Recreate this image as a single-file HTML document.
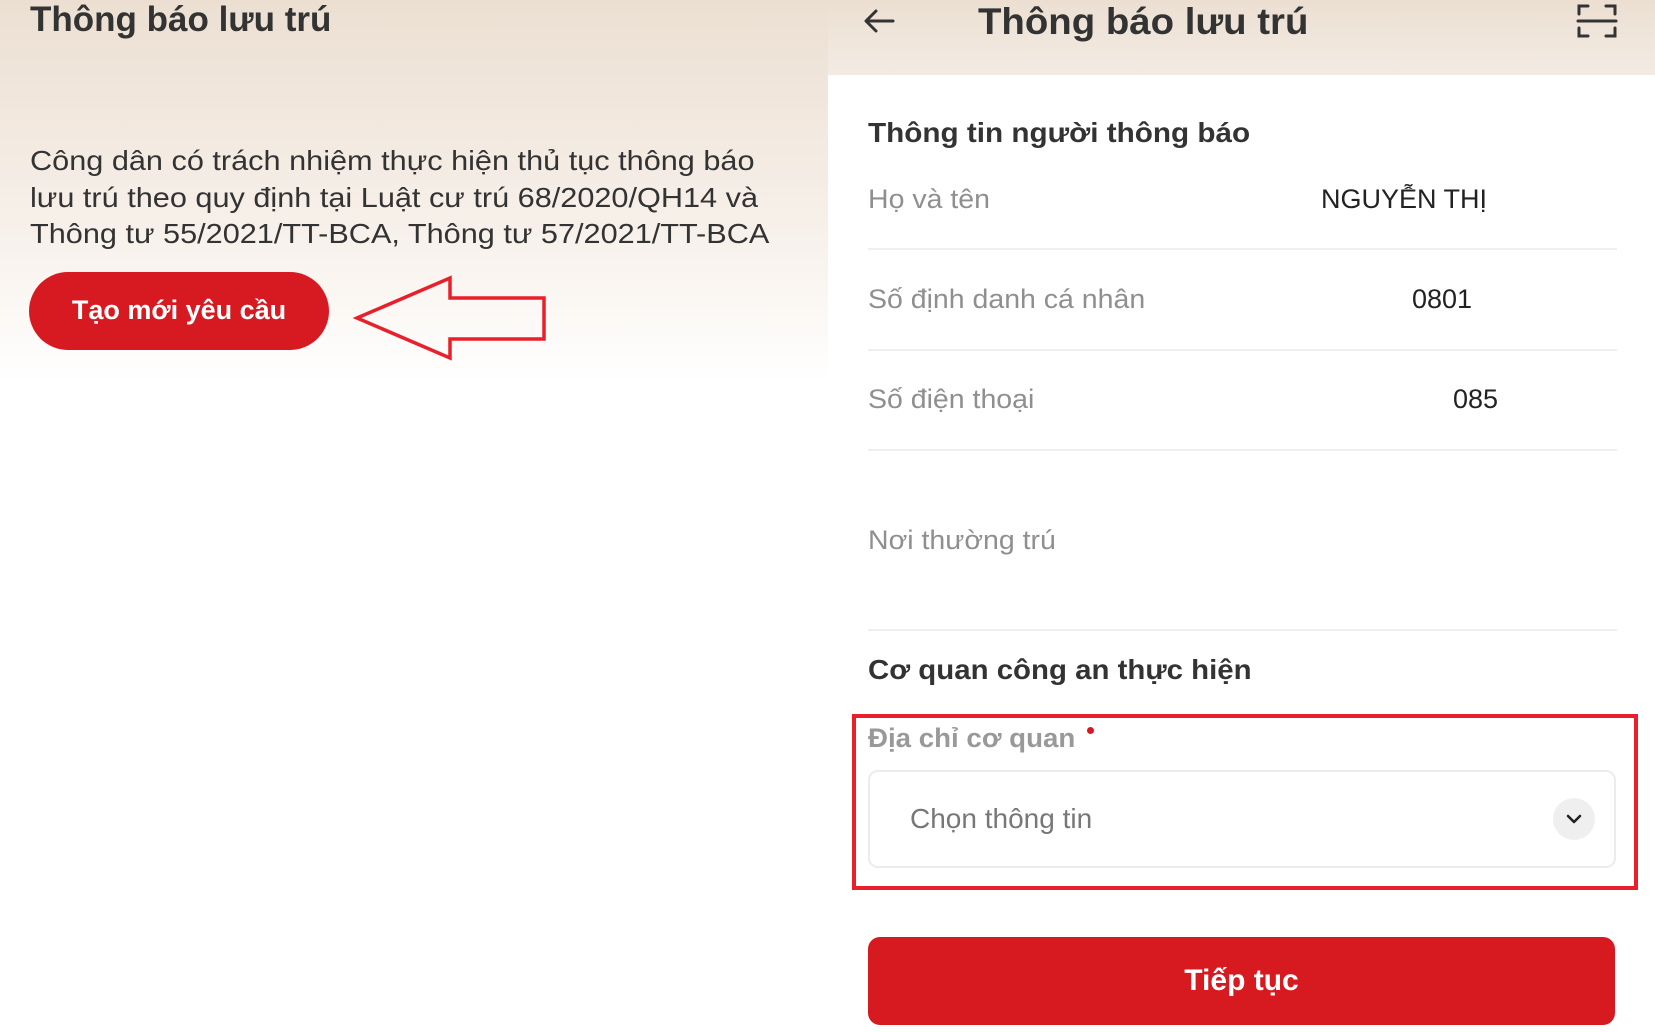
<!DOCTYPE html>
<html><head><meta charset="utf-8"><style>
*{margin:0;padding:0;box-sizing:border-box}
body{width:1655px;height:1032px;position:relative;background:#fff;font-family:"Liberation Sans",sans-serif;overflow:hidden}
.abs{position:absolute;white-space:nowrap;transform-origin:0 0}
.lbg{left:0;top:0;width:828px;height:385px;background:linear-gradient(#ecdfd2,#f6efe8 55%,#fff)}
.rbg{left:828px;top:0;width:827px;height:75px;background:linear-gradient(#ecdfd2,#f3ebe3)}
.gl{color:#8f8f8f;font-size:27px;transform:scaleX(1.055)}
.val{color:#222;font-size:27px}
.hr{left:868px;width:749px;height:2px;background:#efefef}
</style></head><body>
<div class="abs lbg"></div>
<div class="abs rbg"></div>
<div class="abs" style="left:30px;top:0;font-size:35px;font-weight:bold;color:#333;line-height:40px">Thông báo lưu trú</div>
<div class="abs" style="left:30px;top:143px;font-size:27.5px;color:#333;line-height:36.5px;transform:scaleX(1.115)">Công dân có trách nhiệm thực hiện thủ tục thông báo<br>lưu trú theo quy định tại Luật cư trú 68/2020/QH14 và<br>Thông tư 55/2021/TT-BCA, Thông tư 57/2021/TT-BCA</div>
<div class="abs" style="left:29px;top:272px;width:300px;height:78px;border-radius:39px;background:#d71a22;color:#fff;font-weight:bold;font-size:27px;line-height:76px;text-align:center">Tạo mới yêu cầu</div>
<svg class="abs" style="left:0;top:0" width="828" height="400"><polygon points="357,318 450,278 450,298 544,298 544,339 450,339 450,358" fill="none" stroke="#e8202a" stroke-width="3.5"/></svg>

<svg class="abs" style="left:860px;top:6px" width="40" height="32" viewBox="0 0 40 32"><path d="M33 15H7M16 5L6 15l10 10" fill="none" stroke="#333" stroke-width="3" stroke-linecap="round" stroke-linejoin="round"/></svg>
<div class="abs" style="left:978px;top:0;font-size:37px;font-weight:bold;color:#333;line-height:44px;transform:scaleX(1.037)">Thông báo lưu trú</div>
<svg class="abs" style="left:1576px;top:2px" width="42" height="38" viewBox="0 0 42 38"><path d="M3 12V4h9M30 4h9v8M3 26v8h9M30 34h9v-8M2 19h38" fill="none" stroke="#333" stroke-width="3" stroke-linecap="round"/></svg>

<div class="abs" style="left:868px;top:117px;font-size:28px;font-weight:bold;color:#333;transform:scaleX(1.06)">Thông tin người thông báo</div>
<div class="abs gl" style="left:868px;top:184px">Họ và tên</div>
<div class="abs val" style="left:1321px;top:184px">NGUYỄN THỊ</div>
<div class="abs hr" style="top:248px"></div>
<div class="abs gl" style="left:868px;top:284px">Số định danh cá nhân</div>
<div class="abs val" style="left:1412px;top:284px">0801</div>
<div class="abs hr" style="top:349px"></div>
<div class="abs gl" style="left:868px;top:384px">Số điện thoại</div>
<div class="abs val" style="left:1453px;top:384px">085</div>
<div class="abs hr" style="top:449px"></div>
<div class="abs gl" style="left:868px;top:525px">Nơi thường trú</div>
<div class="abs hr" style="top:629px"></div>
<div class="abs" style="left:868px;top:654px;font-size:28px;font-weight:bold;color:#333;transform:scaleX(1.05)">Cơ quan công an thực hiện</div>
<div class="abs" style="left:852px;top:714px;width:786px;height:176px;border:4px solid #e8202a"></div>
<div class="abs" style="left:868px;top:723px;font-size:27px;font-weight:bold;color:#999;transform:scaleX(1.025)">Địa chỉ cơ quan</div>
<div class="abs" style="left:1087px;top:727px;width:7px;height:7px;border-radius:50%;background:#d71a22"></div>
<div class="abs" style="left:868px;top:770px;width:748px;height:98px;border:2px solid #ececec;border-radius:10px"></div>
<div class="abs" style="left:910px;top:803px;font-size:28px;color:#777">Chọn thông tin</div>
<div class="abs" style="left:1553px;top:798px;width:42px;height:42px;border-radius:50%;background:#efefef"></div>
<svg class="abs" style="left:1562px;top:808px" width="24" height="22" viewBox="0 0 24 22"><path d="M6 8l6 6 6-6" fill="none" stroke="#222" stroke-width="2.6" stroke-linecap="round" stroke-linejoin="round"/></svg>
<div class="abs" style="left:868px;top:937px;width:747px;height:88px;border-radius:12px;background:#d71920;color:#fff;font-weight:bold;font-size:30px;line-height:88px;text-align:center">Tiếp tục</div>
</body></html>
